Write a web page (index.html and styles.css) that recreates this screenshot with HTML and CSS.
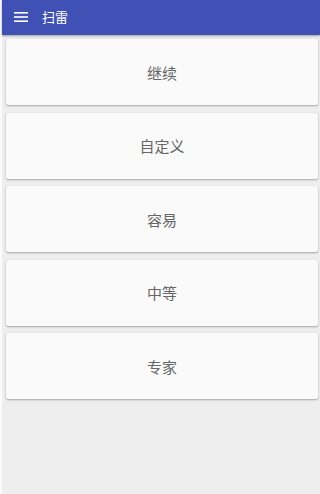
FILE: index.html
```html
<!DOCTYPE html>
<html lang="zh">
<head>
<meta charset="utf-8">
<link rel="stylesheet" href="styles.css">
</head>
<body>
<div class="screen">
  <header class="appbar">
    <svg class="menu" width="14" height="12" viewBox="0 0 14 12">
      <rect x="0" y="1" width="14" height="1.6" fill="#fff"/>
      <rect x="0" y="5.2" width="14" height="1.6" fill="#fff"/>
      <rect x="0" y="9.4" width="14" height="1.6" fill="#fff"/>
    </svg>
    <span class="title">扫雷</span>
  </header>
  <main class="list">
    <div class="card">继续</div>
    <div class="card">自定义</div>
    <div class="card">容易</div>
    <div class="card">中等</div>
    <div class="card">专家</div>
  </main>
</div>
</body>
</html>
```
FILE: styles.css
```css
html, body {
  margin: 0;
  padding: 0;
  background: #fbfbfb;
}
.screen {
  margin-left: 2px;
  width: 318px;
  height: 494px;
  background: #eeeeee;
  font-family: "Roboto", "Noto Sans CJK SC", sans-serif;
  display: flex;
  flex-direction: column;
}
.appbar {
  height: 35px;
  background: #3f51b5;
  display: flex;
  align-items: center;
  box-shadow: 0 1px 2px rgba(0,0,0,0.35);
  position: relative;
  z-index: 1;
}
.menu {
  margin-left: 12px;
  margin-top: -1px;
}
.title {
  color: #fff;
  font-size: 13px;
  margin-left: 14px;
  margin-top: -2px;
}
.list {
  display: flex;
  flex-direction: column;
  gap: 7.5px;
  padding: 4px 2px 0 4px;
}
.card {
  height: 66px;
  background: #fafafa;
  border-radius: 2px;
  box-shadow: 0 1px 2px rgba(0,0,0,0.3), 0 0 1px rgba(0,0,0,0.12);
  display: flex;
  align-items: center;
  justify-content: center;
  font-size: 15px;
  font-weight: 400;
  color: #666666;
  box-sizing: border-box;
}
```
